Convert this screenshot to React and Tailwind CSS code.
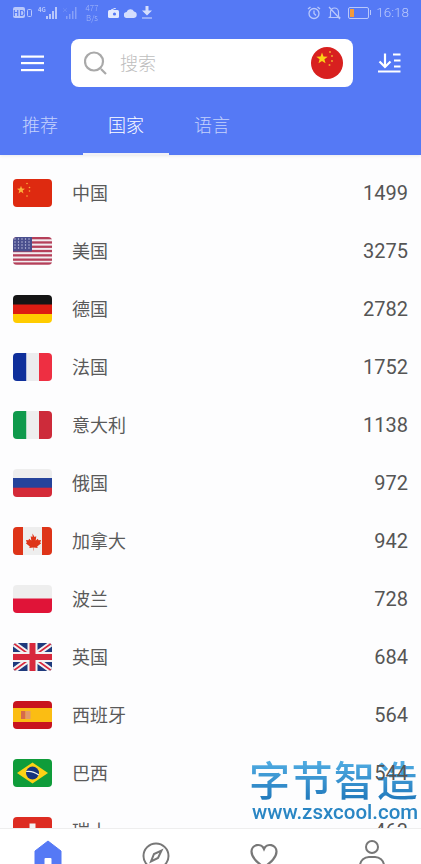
import React from 'react';

const Star = ({ cx, cy, r, fill = '#ffde00' }) => {
    const pts = [];
    for (let i = 0; i < 10; i++) {
        const rad = i % 2 === 0 ? r : r * 0.42;
        const a = (Math.PI / 5) * i - Math.PI / 2;
        pts.push(`${cx + rad * Math.cos(a)},${cy + rad * Math.sin(a)}`);
    }
    return <polygon points={pts.join(' ')} fill={fill} />;
};

const flagChina = (
    <>
        <rect width="39" height="28" fill="#de2a10" />
        <Star cx={8} cy={11} r={4.2} fill="#fbb03b" />
        <circle cx="14" cy="4.500" r="0.8" fill="#fbb03b" />
        <circle cx="16.5" cy="8.500" r="0.8" fill="#fbb03b" />
        <circle cx="16.5" cy="12" r="0.8" fill="#fbb03b" />
        <circle cx="14" cy="17" r="0.8" fill="#fbb03b" />
    </>
);

const flagUsa = (
    <>
        <rect width="39" height="28" fill="#f1edf0" />
        {[0, 4.3, 8.6, 12.9, 17.2, 21.5, 25.4].map(y => (
            <rect key={y} y={y} width="39" height="2.3" fill="#b5405a" />
        ))}
        <rect width="19" height="14.5" fill="#4a4f8e" />
        {[2, 5, 8, 11].map(y =>
            [2, 5.5, 9, 12.5, 16].map(x => <circle key={`${x}-${y}`} cx={x} cy={y} r="0.7" fill="#c9cbe6" />),
        )}
    </>
);

const flagGermany = (
    <>
        <rect width="39" height="10" fill="#151515" />
        <rect y="9.5" width="39" height="10" fill="#dd1c12" />
        <rect y="19" width="39" height="9" fill="#ffcc00" />
    </>
);

const flagFrance = (
    <>
        <rect width="13.5" height="28" fill="#0f2f9b" />
        <rect x="13.5" width="12.5" height="28" fill="#ececee" />
        <rect x="26" width="13" height="28" fill="#ee2f42" />
    </>
);

const flagItaly = (
    <>
        <rect width="13.5" height="28" fill="#0f9a4c" />
        <rect x="13.5" width="12.5" height="28" fill="#eeeeee" />
        <rect x="26" width="13" height="28" fill="#cd2b3a" />
    </>
);

const flagRussia = (
    <>
        <rect width="39" height="9.5" fill="#eeeeee" />
        <rect y="9" width="39" height="10" fill="#25439b" />
        <rect y="18.7" width="39" height="9.3" fill="#d42a38" />
    </>
);

const flagCanada = (
    <>
        <rect width="39" height="28" fill="#eeeeee" />
        <rect width="10" height="28" fill="#de3418" />
        <rect x="29" width="10" height="28" fill="#de3418" />
        <path
            d="M19.5 6.5l2 3.5 1.8-.8-.6 4.2 2.2-1.6.6 1.5 2.5-.3-.8 2.7 1 .6-4 3.2.5 1.5-4-.5v3h-.4v-3l-4 .5.5-1.5-4-3.2 1-.6-.8-2.7 2.5.3.6-1.5 2.2 1.6-.6-4.2 1.8.8z"
            fill="#de3418"
        />
    </>
);

const flagPoland = (
    <>
        <rect width="39" height="14" fill="#eeeeee" />
        <rect y="13.5" width="39" height="14.5" fill="#e01438" />
    </>
);

const flagUk = (
    <>
        <rect width="39" height="28" fill="#1f3a7d" />
        <path d="M0 0L39 28M39 0L0 28" stroke="#f2f2f2" strokeWidth="5.5" />
        <path d="M0 0L39 28M39 0L0 28" stroke="#d8283c" strokeWidth="1.8" />
        <rect x="14.5" width="10" height="28" fill="#f2f2f2" />
        <rect y="9" width="39" height="10" fill="#f2f2f2" />
        <rect x="16.5" width="6" height="28" fill="#d8283c" />
        <rect y="11" width="39" height="6" fill="#d8283c" />
    </>
);

const flagSpain = (
    <>
        <rect width="39" height="28" fill="#c8141e" />
        <rect y="7" width="39" height="14" fill="#fbbd13" />
        <rect x="8" y="10" width="4.5" height="8" fill="#d66a4a" />
        <rect x="12.5" y="10" width="5" height="8" fill="#e39a6a" />
    </>
);

const flagBrazil = (
    <>
        <rect width="39" height="28" fill="#0f9c3a" />
        <polygon points="19.5,3.5 35,14 19.5,24.5 4,14" fill="#fcd116" />
        <circle cx="19.5" cy="14" r="6.5" fill="#15337e" />
        <path d="M13.2 12.5Q20 11.5 25.8 16" stroke="#f2f2f2" strokeWidth="1.2" fill="none" />
    </>
);

const flagSwiss = (
    <>
        <rect width="39" height="28" fill="#dd2c22" />
        <rect x="16.5" y="6.5" width="6" height="15" fill="#f4f4f4" />
        <rect x="12" y="11" width="15" height="6" fill="#f4f4f4" />
    </>
);

const countries = [
    { name: '中国', count: '1499', flag: flagChina },
    { name: '美国', count: '3275', flag: flagUsa },
    { name: '德国', count: '2782', flag: flagGermany },
    { name: '法国', count: '1752', flag: flagFrance },
    { name: '意大利', count: '1138', flag: flagItaly },
    { name: '俄国', count: '972', flag: flagRussia },
    { name: '加拿大', count: '942', flag: flagCanada },
    { name: '波兰', count: '728', flag: flagPoland },
    { name: '英国', count: '684', flag: flagUk },
    { name: '西班牙', count: '564', flag: flagSpain },
    { name: '巴西', count: '544', flag: flagBrazil },
    { name: '瑞士', count: '463', flag: flagSwiss },
];

const StatusBar = () => (
    <div className="h-[25px] flex items-center justify-between pl-[13px] pr-[12px] text-[#b9c8fb] blur-[0.4px]">
        <div className="flex items-center">
            <span className="bg-[#b9c8fb] text-[#5579f5] rounded-[2px] text-[8px] leading-[11px] font-bold w-[12px] text-center">
                HD
            </span>
            <svg width="5" height="8" viewBox="0 0 5 8" className="ml-[2px]">
                <rect x="0.5" y="0.5" width="4" height="7" rx="1" fill="none" stroke="currentColor" />
            </svg>
            <svg width="20" height="14" viewBox="0 0 20 14" className="ml-[6px]">
                <text x="0" y="6" fontSize="6" fill="currentColor" fontWeight="700">4G</text>
                <rect x="8" y="10" width="2" height="3" fill="currentColor" />
                <rect x="11" y="8" width="2" height="5" fill="currentColor" />
                <rect x="14" y="5" width="2" height="8" fill="currentColor" />
                <rect x="17" y="1" width="2" height="12" fill="currentColor" />
            </svg>
            <svg width="16" height="14" viewBox="0 0 16 14" className="ml-[4px] opacity-50">
                <text x="0" y="6" fontSize="6" fill="currentColor">×</text>
                <rect x="4" y="10" width="1.5" height="3" fill="currentColor" />
                <rect x="7" y="8" width="1.5" height="5" fill="currentColor" />
                <rect x="10" y="5" width="1.5" height="8" fill="currentColor" />
                <rect x="13" y="1" width="1.5" height="12" fill="currentColor" />
            </svg>
            <div className="ml-[6px] w-[16px] text-[8px] leading-[10px] text-center opacity-80">
                <div>477</div>
                <div>B/s</div>
            </div>
            <svg width="11" height="10" viewBox="0 0 11 10" className="ml-[8px] text-[#e3e9fe]">
                <rect y="2" width="11" height="8" rx="1.5" fill="currentColor" />
                <path d="M3 2L8 0" stroke="currentColor" />
                <circle cx="6.5" cy="6" r="1.6" fill="#5579f5" />
            </svg>
            <svg width="13" height="10" viewBox="0 0 13 10" className="ml-[5px] text-[#d5defd]">
                <path d="M3 10a3 3 0 0 1-.4-6A4 4 0 0 1 10 3.5 3.3 3.3 0 0 1 10 10z" fill="currentColor" />
            </svg>
            <svg width="12" height="13" viewBox="0 0 12 13" className="ml-[4px] text-[#d5defd]">
                <path d="M4.5 0h3v4.5H11L6 9.5 1 4.5h3.5z" fill="currentColor" />
                <rect x="1" y="11.5" width="10" height="1" fill="currentColor" />
            </svg>
        </div>
        <div className="flex items-center">
            <svg width="14" height="14" viewBox="0 0 14 14" fill="none" stroke="currentColor" strokeWidth="1.3">
                <circle cx="7" cy="7.5" r="5" />
                <path d="M7 4.5v3l2 2M1 3l2.5-2M13 3l-2.5-2" />
            </svg>
            <svg width="13" height="14" viewBox="0 0 13 14" fill="none" stroke="currentColor" strokeWidth="1.2" className="ml-[7px]">
                <path d="M2.5 10.5V6a4 4 0 0 1 8 0v4.5l1 1h-10zM1 1l11 12" />
            </svg>
            <div className="ml-[7px] w-[21px] h-[12px] rounded-[2px] border border-[#b9c8fb] p-[1px]">
                <div className="w-[4px] h-full bg-[#f29a3c]" />
            </div>
            <div className="w-[1.5px] h-[5px] bg-[#b9c8fb] ml-[1px]" />
            <span className="ml-[5px] text-[13.5px] leading-none font-['Roboto',sans-serif]">16:18</span>
        </div>
    </div>
);

const Header = () => (
    <div className="bg-[#5579f5] h-[155px] shrink-0 shadow-[0_1px_3px_rgba(0,0,0,0.08)] relative z-10">
        <StatusBar />
        <div className="flex items-center mt-[14px] h-[48px]">
            <svg width="23" height="17" viewBox="0 0 23 17" className="ml-[21px] shrink-0 blur-[0.3px]">
                <rect y="0.5" width="23" height="2.2" fill="#fff" />
                <rect y="7" width="23" height="2.2" fill="#fff" />
                <rect y="14" width="23" height="2.2" fill="#fff" />
            </svg>
            <div className="ml-[27px] w-[282px] h-[48px] bg-white rounded-[8px] flex items-center pl-[13px] pr-[10px]">
                <svg width="23" height="24" viewBox="0 0 23 24" fill="none" stroke="#a9a9a9" strokeWidth="2.2" className="shrink-0">
                    <circle cx="10" cy="10.5" r="9" />
                    <path d="M17 18l5 5" />
                </svg>
                <span className="ml-[13px] text-[18px] text-[#bdbdbd] leading-none -mt-[3px]">搜索</span>
                <svg width="32" height="32" viewBox="0 0 32 32" className="ml-auto shrink-0 blur-[0.3px]">
                    <circle cx="16" cy="16" r="16" fill="#d8201f" />
                    <Star cx={11} cy={11.5} r={6} fill="#fcd116" />
                    <circle cx="19" cy="5" r="1" fill="#f0a030" />
                    <circle cx="21" cy="9" r="1" fill="#f0a030" />
                    <circle cx="21" cy="14" r="1" fill="#f0a030" />
                    <circle cx="18.5" cy="18" r="1" fill="#f0a030" />
                </svg>
            </div>
            <svg width="23" height="20" viewBox="0 0 23 20" fill="none" stroke="#fff" className="ml-[25px] shrink-0 blur-[0.3px]">
                <path d="M7 0.5v13" strokeWidth="2.2" />
                <path d="M1.5 8.5L7 14l5.5-5.5" strokeWidth="2.2" />
                <path d="M0 18.5h22.5" strokeWidth="2" />
                <path d="M15 1.5h7.5M16 7.5h6.5M16 13.5h6.5" strokeWidth="2" />
            </svg>
        </div>
        <div className="flex mt-[19px] h-[49px] text-[18px] relative">
            <div className="w-[83px] flex justify-center pt-[5px] text-[#c5d2fc] pr-[3px] leading-[26px]">推荐</div>
            <div className="w-[86px] h-full flex justify-center pt-[5px] text-white leading-[26px] border-b-[2px] border-[#f1f1f8]">国家</div>
            <div className="w-[86px] flex justify-center pt-[5px] text-[#c5d2fc] leading-[26px]">语言</div>
        </div>
    </div>
);

const CountryRow = ({ country }) => (
    <div className="h-[58px] shrink-0 flex items-center pl-[13px] pr-[13px]">
        <svg width="39" height="28" viewBox="0 0 39 28" className="rounded-[4px] shrink-0 blur-[0.3px]">
            {country.flag}
        </svg>
        <span className="ml-[20px] text-[18px] text-[#5a5a5a] font-normal leading-none -mt-[3px]">{country.name}</span>
        <span className="ml-auto text-[20px] text-[#555] font-normal leading-none font-['Roboto',sans-serif] relative z-30">{country.count}</span>
    </div>
);

const BottomNav = () => (
    <div className="h-[36px] shrink-0 bg-white border-t border-[#eeeeee] relative z-10 overflow-hidden flex pl-[34px] pt-[13px]">
        <svg width="28" height="28" viewBox="0 0 28 28" className="shrink-0 -mt-[2px]">
            <path d="M14 1L27 11v17H1V11z" fill="#5579f5" stroke="#5579f5" strokeLinejoin="round" />
            <rect x="10.5" y="18" width="7" height="10" rx="1" fill="#fff" />
        </svg>
        <svg width="28" height="28" viewBox="0 0 28 28" fill="none" stroke="#777" strokeWidth="2" className="shrink-0 ml-[80px]">
            <circle cx="14" cy="14" r="12.5" />
            <path d="M19.5 8.5L16 16l-7 3.5L12 12z" />
        </svg>
        <svg width="28" height="26" viewBox="0 0 28 26" fill="none" stroke="#777" strokeWidth="2.2" className="shrink-0 ml-[80px] mt-[1px]">
            <path d="M14 24.5C7 19 1.5 14.5 1.5 8.5A6.5 6.5 0 0 1 14 6a6.5 6.5 0 0 1 12.5 2.5C26.500 14.500 21 19 14 24.500z" />
        </svg>
        <svg width="28" height="28" viewBox="0 0 28 28" fill="none" stroke="#777" strokeWidth="2" className="shrink-0 ml-[80px] -mt-[2px]">
            <circle cx="14" cy="7" r="6" />
            <path d="M2 28v-3a9 9 0 0 1 9-8h6a9 9 0 0 1 9 8v3" />
        </svg>
    </div>
);

const Watermark = () => (
    <div className="absolute left-[249px] top-[755px] w-[172px] z-20 pointer-events-none blur-[0.5px]">
        <div className="text-[41px] leading-[46px] tracking-[1.5px] font-medium whitespace-nowrap bg-gradient-to-b from-[#57b4e8] to-[#1f78bb] bg-clip-text text-transparent">
            字节智造
        </div>
        <div className="text-[20.5px] leading-[22px] font-['Roboto',sans-serif] font-medium whitespace-nowrap text-[#2a86c4] pl-[3px]">
            www.zsxcool.com
        </div>
    </div>
);

const App = () => {
    return (
        <div className="relative w-[421px] h-[864px] overflow-hidden bg-[#fdfdfe] flex flex-col font-['Noto_Sans_CJK_SC','Noto_Sans',sans-serif] font-light">
            <Header />
            <div className="flex-1 min-h-0 overflow-hidden flex flex-col pt-[9px]">
                {countries.map(country => (
                    <CountryRow key={country.name} country={country} />
                ))}
            </div>
            <BottomNav />
            <Watermark />
        </div>
    );
};

export default App;
